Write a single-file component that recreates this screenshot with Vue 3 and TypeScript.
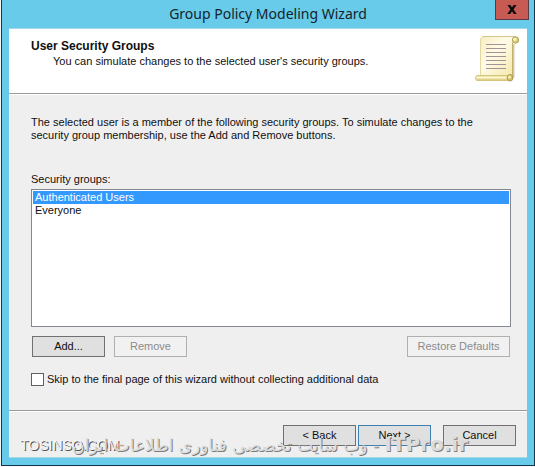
<script setup lang="ts">
import { ref } from 'vue'

const groups: string[] = ['Authenticated Users', 'Everyone']
const selected = ref<string>('Authenticated Users')
const skip = ref<boolean>(false)
</script>

<template>
  <div class="desktop">
    <main class="window">
      <header class="titlebar">
        <h1 class="title">Group Policy Modeling Wizard</h1>
        <button class="close" type="button" aria-label="Close">
          <svg width="10" height="9" viewBox="0 0 10 9" aria-hidden="true">
            <path d="M0.5 0H3.4L5 2.5L6.6 0H9.5L6.6 4.4L9.7 9H6.8L5 6.3L3.2 9H0.3L3.4 4.4Z" fill="#0c0c0c" />
          </svg>
        </button>
      </header>

      <div class="client">
        <section class="banner">
          <div>
            <h2 class="heading">User Security Groups</h2>
            <p class="subheading">You can simulate changes to the selected user's security groups.</p>
          </div>
          <svg class="scroll" width="46" height="48" viewBox="0 0 46 48" aria-hidden="true">
            <defs>
              <linearGradient id="paper" x1="0" y1="0" x2="1" y2="1">
                <stop offset="0" stop-color="#f6ecc0" />
                <stop offset="0.4" stop-color="#fffbe8" />
                <stop offset="1" stop-color="#f3e6a4" />
              </linearGradient>
              <linearGradient id="roll" x1="0" y1="0" x2="0" y2="1">
                <stop offset="0" stop-color="#e2d28a" />
                <stop offset="0.4" stop-color="#fff9cf" />
                <stop offset="1" stop-color="#d3c069" />
              </linearGradient>
            </defs>
            <path d="M39 9L40.500 9V42L38 45Z" fill="#a9a58e" opacity="0.6" />
            <path d="M6.500 41V6Q6.500 1.500 9.500 1.500H42Q38.500 3 38.500 8V42Z" fill="url(#paper)" stroke="#e3d7a2" />
            <path d="M38.500 8V41" stroke="#c0b06a" />
            <path d="M9 1.500H41" stroke="#d3c68c" />
            <ellipse cx="41.500" cy="5" rx="3.200" ry="3.200" fill="#d9ca80" stroke="#b5a661" />
            <ellipse cx="40.800" cy="4.300" rx="1.500" ry="1.600" fill="#fff6c0" />
            <path d="M3 40.500H35V45.500H3Q1.500 45 1.500 43Q1.500 41 3 40.500Z" fill="url(#roll)" stroke="#d6c679" />
            <ellipse cx="36" cy="42.800" rx="2.800" ry="3.300" fill="#d3c26c" stroke="#ac9c50" />
            <ellipse cx="35.500" cy="42" rx="1.300" ry="1.600" fill="#fff3b0" />
            <path
              d="M12 9.500H32M12 13.500H32M12 17.500H32M12 21.500H32M12 25.500H32M12 29.500H32M12 33.500H32"
              stroke="#a39396"
            />
          </svg>
        </section>

        <section class="content">
          <p class="intro">
            The selected user is a member of the following security groups. To simulate changes to the<br />
            security group membership, use the Add and Remove buttons.
          </p>
          <label class="list-label" for="groups">Security groups:</label>
          <select id="groups" v-model="selected" class="list" size="10">
            <option v-for="group in groups" :key="group" :value="group">{{ group }}</option>
          </select>
          <div class="actions">
            <button class="btn" type="button">Add...</button>
            <button class="btn" type="button" disabled>Remove</button>
            <button class="btn wide" type="button" disabled>Restore Defaults</button>
          </div>
          <label class="skip">
            <input v-model="skip" class="check" type="checkbox" />
            <span>Skip to the final page of this wizard without collecting additional data</span>
          </label>
        </section>

        <footer class="footer">
          <button class="btn" type="button">&lt; Back</button>
          <button class="btn default" type="button">Next &gt;</button>
          <button class="btn cancel" type="button">Cancel</button>
        </footer>
      </div>
    </main>
    <span class="mark site">TOSINSO.COM</span>
    <span class="mark tagline" dir="rtl" lang="fa"><bdi class="latin">ITPro.ir</bdi> - وب سایت تخصصی فناوری اطلاعات ایران</span>
  </div>
</template>

<style>
body {
  background: #f7f7f7;
}
</style>

<style scoped>
.desktop {
  position: relative;
  padding: 0 0 2px 1px;
  font: 11px/13px 'Liberation Sans', Arial, sans-serif;
  color: #101010;
}

.window {
  padding: 0 7px 7px;
  background: #67cbe9;
  border: 1px solid #14364a;
  border-top: 0;
}

.titlebar {
  position: relative;
  display: flex;
  justify-content: center;
  height: 28px;
}

.title {
  margin: 0;
  font: 400 14px/28px 'Noto Sans', 'Open Sans', sans-serif;
  color: #15242b;
}

.close {
  position: absolute;
  top: 0;
  right: -2px;
  display: flex;
  align-items: center;
  justify-content: center;
  width: 34px;
  height: 20px;
  padding: 0;
  background: #c75b54;
  border: 1px solid #5a3a40;
  border-top: 0;
}

.client {
  background: #f0eff0;
  border: 1px solid #a5d9e8;
  border-width: 1px 0;
}

.banner {
  display: flex;
  justify-content: space-between;
  height: 64px;
  padding: 0 7px 0 22px;
  background: #fff;
  border-bottom: 1px solid #9b9b9b;
}

.heading {
  margin: 0;
  padding-top: 10px;
  font-size: 12px;
  line-height: 14px;
}

.subheading {
  margin: 0;
  padding: 2px 0 0 22px;
}

.scroll {
  margin-top: 6px;
}

.content {
  display: flex;
  flex-direction: column;
  padding: 21px 16px 24px 22px;
  border-top: 1px solid #fff;
}

.intro {
  margin: 0 0 31px;
}

.list-label {
  margin-bottom: 3px;
}

.list {
  height: 138px;
  margin: 0;
  padding: 1px;
  overflow: hidden;
  font: inherit;
  color: #101010;
  background: #fff;
  border: 1px solid #828790;
  border-radius: 0;
  outline: 0;
}

.list option {
  min-height: 13px;
  padding: 0 2px;
  line-height: 13px;
}

.list option:checked {
  color: #fff;
  -webkit-text-fill-color: #fff;
  background: linear-gradient(#3399ff, #3399ff);
}

.actions {
  display: flex;
  gap: 9px;
  padding: 9px 1px 0;
}

.btn {
  width: 73px;
  height: 21px;
  padding: 0;
  font: inherit;
  color: #101010;
  background: #e1e0e1;
  border: 1px solid #707070;
  border-radius: 0;
}

.btn:disabled {
  color: #8b8b8b;
  background: #f2f1f2;
  border-color: #b0b0b0;
}

.btn.wide {
  width: 103px;
  margin-left: auto;
}

.btn.default {
  border-color: #3c7fb1;
}

.skip {
  display: flex;
  align-items: center;
  gap: 3px;
  margin-top: 16px;
}

.check {
  appearance: none;
  width: 13px;
  height: 13px;
  margin: 0;
  background: #fff;
  border: 1px solid #606060;
}

.check:checked {
  box-shadow: inset 0 0 0 3px #fff;
  background: #303030;
}

.footer {
  display: flex;
  justify-content: flex-end;
  gap: 2px;
  padding: 14px 11px 11px;
  border-top: 1px solid #9b9b9b;
  box-shadow: inset 0 1px #fff;
}

.cancel {
  margin-left: 10px;
}

.mark {
  position: absolute;
  white-space: nowrap;
  pointer-events: none;
}

.site {
  left: 20px;
  bottom: 15px;
  font-size: 14px;
  line-height: 16px;
  color: #f4f4f4;
  text-shadow: 1px 1px #505050;
}

.tagline {
  right: 67px;
  bottom: 10px;
  font: 17px/26px 'DejaVu Sans', sans-serif;
  color: #dcdcdc;
  text-shadow: 1px 1px #7c7c7c;
}

.latin {
  font-size: 20px;
  font-weight: 700;
}
</style>
